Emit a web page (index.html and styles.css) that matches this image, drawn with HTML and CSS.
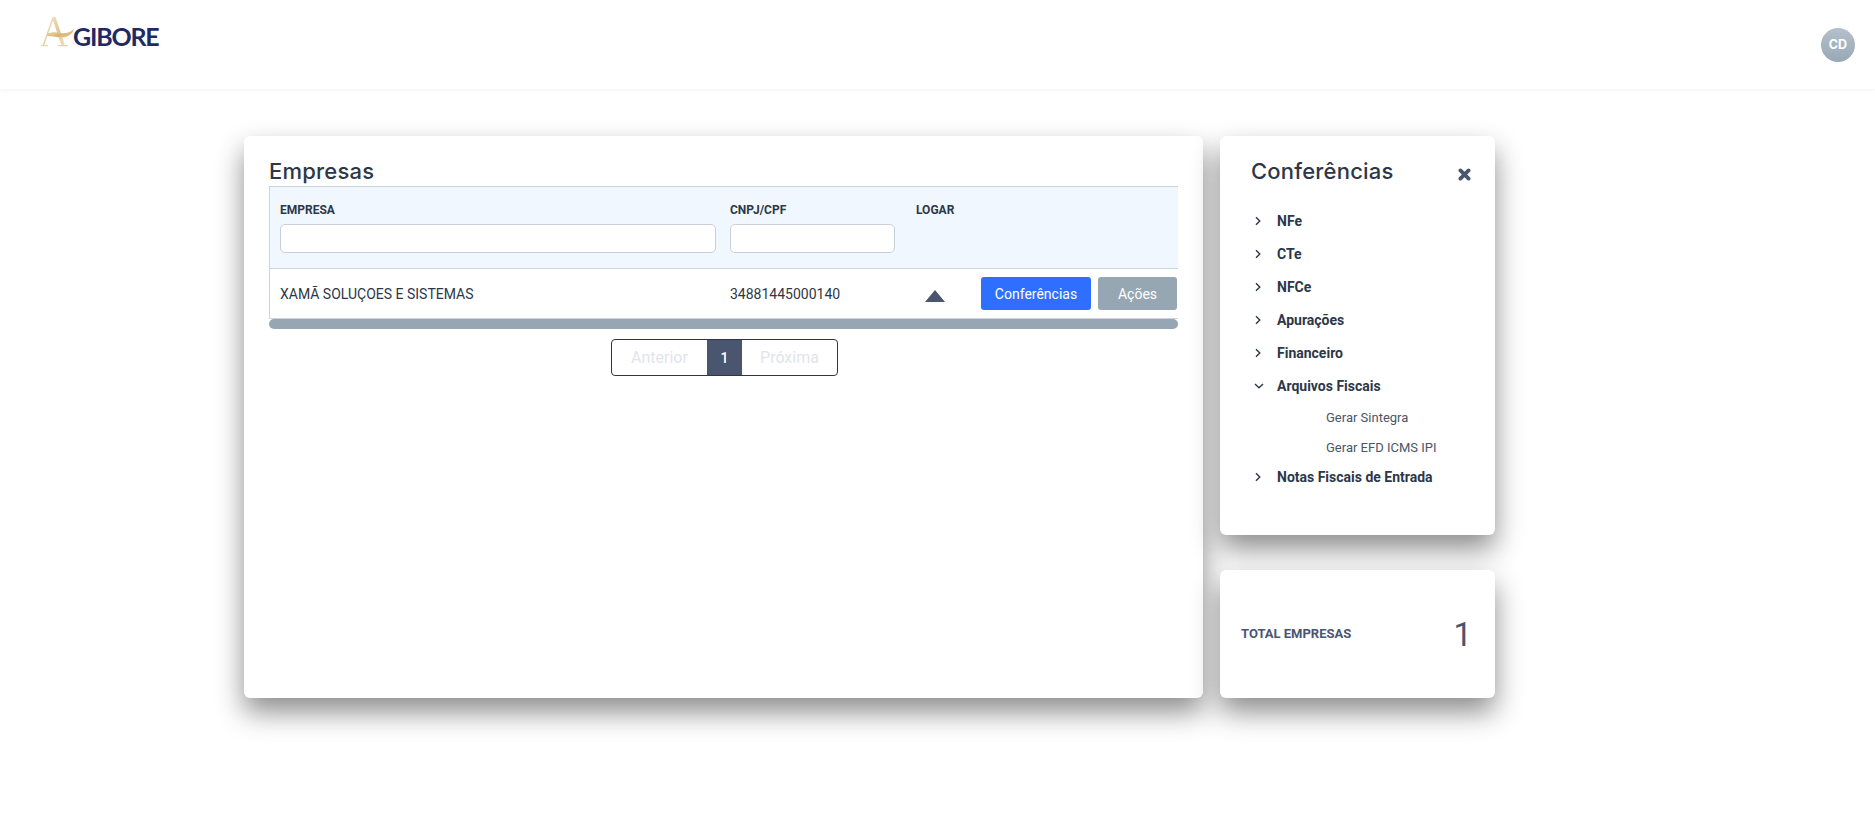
FILE: index.html
```html
<!DOCTYPE html>
<html lang="pt-BR">
<head>
  <meta charset="UTF-8">
  <meta name="viewport" content="width=device-width, initial-scale=1.0">
  <title>Agibore</title>
  <link rel="stylesheet" href="styles.css">
</head>
<body>

  <header class="topbar">
    <div class="logo">
      <svg class="logo-mark" width="34" height="32" viewBox="0 0 34 32">
        <defs>
          <linearGradient id="gold" x1="0" y1="0" x2="1" y2="1">
            <stop offset="0" stop-color="#f3e3c3"/>
            <stop offset="0.6" stop-color="#d9b470"/>
            <stop offset="1" stop-color="#ecd7ae"/>
          </linearGradient>
        </defs>
        <path d="M1.5 29.5 L11.5 1 L14.5 1 L24 29.5 L20.5 29.5 L12 4.5 L3 29.5 Z" fill="url(#gold)" opacity="0.75"/>
        <path d="M6 17.5 C12 15.8 15 16 19 17 C24 18 29 17 33 13 C31 18.5 27 21.5 21 21.5 C15 21.5 11 19.5 6 20 Z" fill="url(#gold)"/>
        <rect x="0" y="29" width="7" height="1.2" fill="#e5d3b0"/>
        <rect x="17" y="29" width="10" height="1.2" fill="#e5d3b0"/>
      </svg>
      <span class="logo-text">GIBORE</span>
    </div>
    <div class="avatar">CD</div>
  </header>

  <main class="content">
    <section class="card card-main">
      <h2 class="card-title">Empresas</h2>
      <div class="table-wrap">
        <div class="table-row table-head">
          <div class="cell cell-name">
            <label class="head-label">EMPRESA</label>
            <input class="filter" type="text">
          </div>
          <div class="cell cell-doc">
            <label class="head-label">CNPJ/CPF</label>
            <input class="filter" type="text">
          </div>
          <div class="cell">
            <label class="head-label">LOGAR</label>
          </div>
          <div class="cell"></div>
        </div>
        <div class="table-row table-body">
          <div class="cell cell-name">XAMÃ SOLUÇOES E SISTEMAS</div>
          <div class="cell">34881445000140</div>
          <div class="cell cell-arrow"><span class="arrow-up"></span></div>
          <div class="cell cell-actions">
            <button class="btn btn-blue">Conferências</button>
            <button class="btn btn-gray">Ações</button>
          </div>
        </div>
        <div class="scrollbar"></div>
      </div>
      <div class="pagination">
        <span class="page page-off page-prev">Anterior</span>
        <span class="page page-on">1</span>
        <span class="page page-off page-next">Próxima</span>
      </div>
    </section>

    <aside class="side">
      <section class="card card-conf">
        <div class="conf-head">
          <h2 class="card-title">Conferências</h2>
          <svg class="close" width="13" height="13" viewBox="0 0 13 13">
            <path d="M2.4 2.4 L10.6 10.6 M10.6 2.4 L2.4 10.6" stroke="#4a5570" stroke-width="3.8" stroke-linecap="round"/>
          </svg>
        </div>
        <ul class="tree">
          <li class="tree-item"><svg class="chev" width="10" height="10" viewBox="0 0 10 10"><path d="M2 1.2 L5.8 5 L2 8.8" fill="none" stroke="#2d3748" stroke-width="1.4"/></svg>NFe</li>
          <li class="tree-item"><svg class="chev" width="10" height="10" viewBox="0 0 10 10"><path d="M2 1.2 L5.8 5 L2 8.8" fill="none" stroke="#2d3748" stroke-width="1.4"/></svg>CTe</li>
          <li class="tree-item"><svg class="chev" width="10" height="10" viewBox="0 0 10 10"><path d="M2 1.2 L5.8 5 L2 8.8" fill="none" stroke="#2d3748" stroke-width="1.4"/></svg>NFCe</li>
          <li class="tree-item"><svg class="chev" width="10" height="10" viewBox="0 0 10 10"><path d="M2 1.2 L5.8 5 L2 8.8" fill="none" stroke="#2d3748" stroke-width="1.4"/></svg>Apurações</li>
          <li class="tree-item"><svg class="chev" width="10" height="10" viewBox="0 0 10 10"><path d="M2 1.2 L5.8 5 L2 8.8" fill="none" stroke="#2d3748" stroke-width="1.4"/></svg>Financeiro</li>
          <li class="tree-item"><svg class="chev" width="10" height="10" viewBox="0 0 10 10"><path d="M1 3 L5 6.8 L9 3" fill="none" stroke="#2d3748" stroke-width="1.4"/></svg>Arquivos Fiscais</li>
          <li class="tree-sub">Gerar Sintegra</li>
          <li class="tree-sub">Gerar EFD ICMS IPI</li>
          <li class="tree-item"><svg class="chev" width="10" height="10" viewBox="0 0 10 10"><path d="M2 1.2 L5.8 5 L2 8.8" fill="none" stroke="#2d3748" stroke-width="1.4"/></svg>Notas Fiscais de Entrada</li>
        </ul>
      </section>

      <section class="card card-total">
        <span class="total-label">TOTAL EMPRESAS</span>
        <span class="total-value">1</span>
      </section>
    </aside>
  </main>

</body>
</html>
```

FILE: styles.css
```css
* {
  margin: 0;
  padding: 0;
  box-sizing: border-box;
}

body {
  font-family: Roboto, Arial, sans-serif;
  background: #fff;
  color: #2d3748;
  height: 822px;
  overflow: hidden;
}

.topbar {
  height: 89px;
  display: flex;
  justify-content: space-between;
  padding: 16px 20px 0 41px;
  box-shadow: 0 1px 4px rgba(0, 0, 0, 0.06);
}

.logo {
  display: flex;
  align-items: flex-end;
  height: 32px;
}

.logo-text {
  font-family: Lato, sans-serif;
  font-weight: 700;
  font-size: 25px;
  line-height: 24px;
  letter-spacing: -1.2px;
  color: #1f2a63;
  margin-left: -2px;
}

.avatar {
  width: 34px;
  height: 34px;
  margin-top: 12px;
  border-radius: 50%;
  background: linear-gradient(#b4c0cb, #98a8b6);
  color: #fff;
  font-family: Inter, sans-serif;
  font-size: 12.5px;
  font-weight: 700;
  text-align: center;
  line-height: 34px;
}

.content {
  display: flex;
  gap: 17px;
  padding: 47px 0 0 244px;
}

.card {
  background: #fff;
  border-radius: 6px;
  box-shadow: 0 14px 28px rgba(0, 0, 0, 0.45);
}

.card-title {
  font-family: Inter, sans-serif;
  font-size: 22px;
  font-weight: 500;
  line-height: 26px;
  letter-spacing: 0.2px;
  color: #2d3748;
}

.card-main {
  width: 959px;
  height: 562px;
  padding: 22px 25px 0;
}

.table-wrap {
  margin-top: 2px;
}

.table-row {
  display: grid;
  grid-template-columns: 449px 186px 65px 209px;
  background: #fff;
  border-left: 1px solid #cbd5e0;
}

.table-head {
  height: 83px;
  background: #f0f7ff;
  border-top: 1px solid #cbd5e0;
  border-bottom: 1px solid #cbd5e0;
}

.table-head .cell {
  padding: 16px 11px 0;
}

.table-head .cell-name {
  padding: 16px 3px 0 10px;
}

.table-head .cell-doc {
  padding-right: 10px;
}

.head-label {
  display: block;
  font-size: 12px;
  font-weight: 700;
  line-height: 14px;
  color: #2d3748;
  margin-bottom: 7px;
}

.filter {
  display: block;
  width: 100%;
  height: 29px;
  border: 1px solid #cbd0d8;
  border-radius: 5px;
  background: #fff;
}

.table-body {
  height: 50px;
  align-items: center;
  font-size: 14px;
  color: #2d3748;
  border-bottom: 1px solid #cbd5e0;
}

.table-body .cell {
  padding: 0 11px;
}

.table-body .cell-name {
  padding-left: 10px;
}

.table-body .cell-arrow {
  padding: 4px 0 0 20px;
  line-height: 0;
}

.arrow-up {
  display: inline-block;
  width: 0;
  height: 0;
  border-left: 10px solid transparent;
  border-right: 10px solid transparent;
  border-bottom: 12px solid #4a5570;
}

.table-body .cell-actions {
  display: flex;
  gap: 7px;
  padding-right: 0;
}

.btn {
  height: 33px;
  flex-shrink: 0;
  border: none;
  border-radius: 3px;
  color: #fff;
  font-family: Roboto, Arial, sans-serif;
  font-size: 14px;
}

.btn-blue {
  width: 110px;
  background: #2f6fff;
}

.btn-gray {
  width: 79px;
  background: #97a6b3;
}

.scrollbar {
  height: 10px;
  background: #97a6b3;
  border-radius: 5px;
}

.pagination {
  display: flex;
  width: 227px;
  height: 37px;
  margin: 10px 0 0 342px;
  border: 1px solid #2d3748;
  border-radius: 4px;
  font-size: 14px;
  overflow: hidden;
}

.page {
  display: flex;
  align-items: center;
  justify-content: center;
}

.page-off {
  color: #dfe5ec;
  font-size: 16px;
}

.page-prev {
  width: 95px;
}

.page-next {
  flex: 1;
}

.page-on {
  width: 35px;
  background: #4a5570;
  color: #fff;
  font-weight: 500;
}

.side {
  width: 275px;
  display: flex;
  flex-direction: column;
  gap: 35px;
}

.card-conf {
  height: 399px;
  padding: 22px 24px 0 31px;
}

.conf-head {
  display: flex;
  justify-content: space-between;
  align-items: flex-start;
}

.close {
  margin-top: 10px;
}

.tree {
  list-style: none;
  margin: 20px 0 0 3px;
}

.tree-item {
  display: flex;
  align-items: center;
  height: 33px;
  font-size: 14px;
  font-weight: 700;
  color: #2d3748;
}

.chev {
  width: 10px;
  margin-right: 13px;
}

.tree-sub {
  height: 29px;
  padding-left: 72px;
  font-size: 13px;
  line-height: 31px;
  color: #4a5568;
}

.tree-sub + .tree-sub {
  line-height: 33px;
}

.card-total {
  height: 128px;
  display: flex;
  justify-content: space-between;
  align-items: center;
  padding: 0 23px 0 21px;
}

.total-label {
  font-size: 13px;
  font-weight: 700;
  color: #4a5570;
  margin-bottom: 2px;
}

.total-value {
  font-size: 33px;
  color: #4a5570;
}
```
